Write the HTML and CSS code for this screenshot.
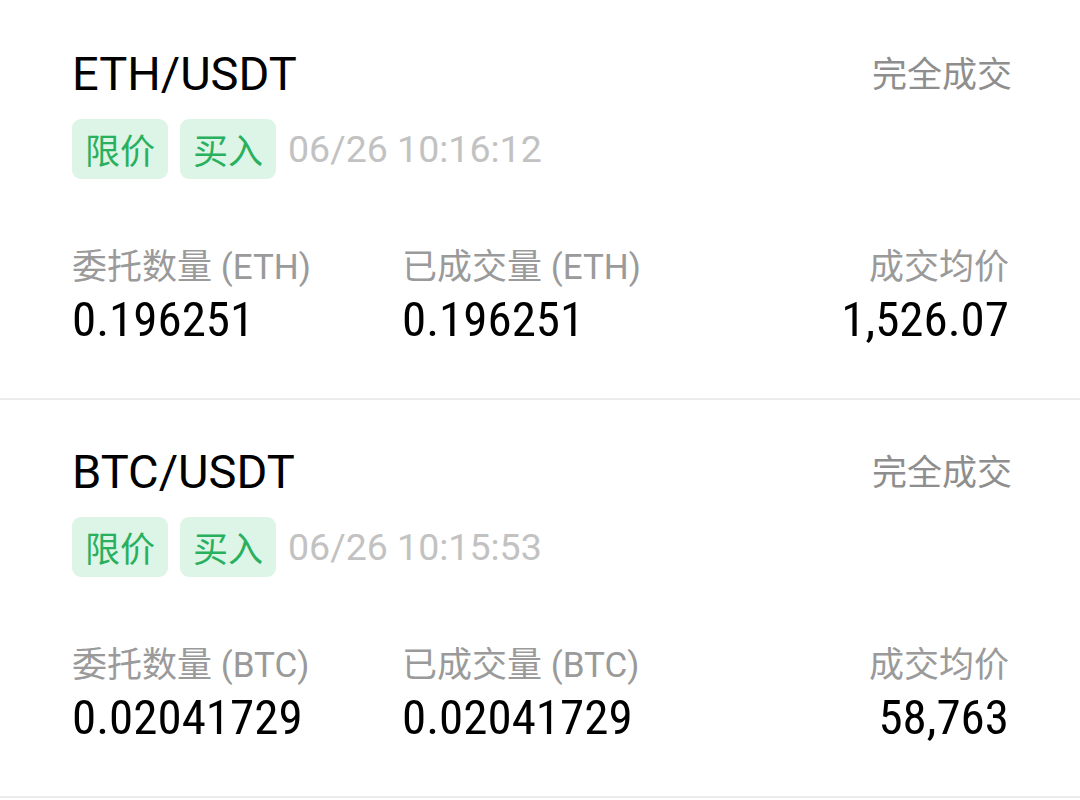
FILE: index.html
```html
<!DOCTYPE html>
<html>
  <head>
    <title>Order History</title>
    <link rel="stylesheet" href="styles.css">
  </head>
  <body>
    <main class="order-list">
      <div class="order-card">
        <div class="order-head">
          <h3 class="pair">ETH/USDT</h3>
          <span class="status">完全成交</span>
        </div>
        <div class="order-tags">
          <span class="tag">限价</span>
          <span class="tag">买入</span>
          <span class="time">06/26 10:16:12</span>
        </div>
        <div class="order-stats">
          <span class="label">委托数量 (ETH)</span>
          <span class="label">已成交量 (ETH)</span>
          <span class="label right">成交均价</span>
          <span class="value">0.196251</span>
          <span class="value">0.196251</span>
          <span class="value right">1,526.07</span>
        </div>
      </div>

      <div class="order-card">
        <div class="order-head">
          <h3 class="pair">BTC/USDT</h3>
          <span class="status">完全成交</span>
        </div>
        <div class="order-tags">
          <span class="tag">限价</span>
          <span class="tag">买入</span>
          <span class="time">06/26 10:15:53</span>
        </div>
        <div class="order-stats">
          <span class="label">委托数量 (BTC)</span>
          <span class="label">已成交量 (BTC)</span>
          <span class="label right">成交均价</span>
          <span class="value">0.02041729</span>
          <span class="value">0.02041729</span>
          <span class="value right">58,763</span>
        </div>
      </div>
    </main>
  </body>
</html>
```

FILE: styles.css
```css
:root {
  --tag-bg: #ddf5e6;
  --tag-color: #29b05e;
  --label-color: #9a9a9a;
  --line: #ebebeb;
}

* {
  margin: 0;
  padding: 0;
  box-sizing: border-box;
}
body {
  background: #fff;
  color: #000;
  padding-top: 2px;
  font-family: Roboto, "Noto Sans CJK SC", sans-serif;
}

.order-card {
  padding: 42px 71px 53px 72px;
  border-bottom: 2px solid var(--line);
}

.order-head {
  display: flex;
  justify-content: space-between;
  align-items: center;
  height: 60px;

  .pair {
    font-size: 47px;
    font-weight: 400;
    line-height: 60px;
  }
  .status {
    font-family: "Noto Sans CJK SC", sans-serif;
    font-size: 35px;
    line-height: 60px;
    color: #8e8e8e;
    margin-right: -3px;
    margin-top: -5px;
  }
}

.order-tags {
  display: flex;
  align-items: center;
  gap: 12px;
  margin-top: 15px;
  height: 60px;

  .tag {
    font-family: "Noto Sans CJK SC", sans-serif;
    font-size: 35px;
    line-height: 60px;
    padding: 0 13px;
    border-radius: 9px;
    background: var(--tag-bg);
    color: var(--tag-color);
  }
  .time {
    font-size: 37.5px;
    color: #c2c2c2;
  }
}

.order-stats {
  display: grid;
  grid-template-columns: 330px 1fr auto;
  grid-template-rows: 44px 50px;
  row-gap: 8px;
  margin-top: 64px;

  .label {
    font-family: Roboto, "Noto Sans CJK SC", sans-serif;
    font-size: 35px;
    line-height: 44px;
    padding-top: 3px;
    color: var(--label-color);
  }
  .value {
    font-family: "Liberation Sans Narrow", "Roboto Condensed", Roboto, sans-serif;
    font-size: 49px;
    line-height: 50px;
  }
  .right {
    text-align: right;
  }
}
```
